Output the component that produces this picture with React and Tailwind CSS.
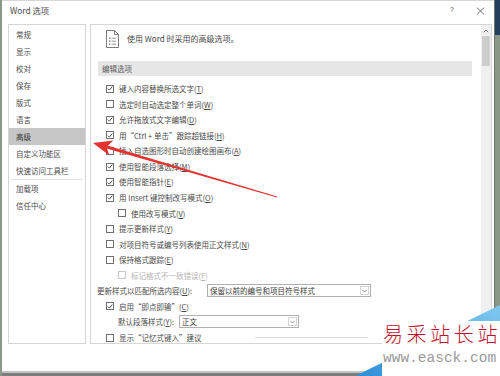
import React from "react";

const CJK = "font-['Noto_Sans_CJK_SC',sans-serif]";

function Check({ checked, disabled }) {
  return (
    <div
      className={`w-[8px] h-[8px] flex-none border ${
        disabled ? "border-[#c8c8c8]" : "border-[#707070]"
      } bg-white flex items-center justify-center`}
    >
      {checked && (
        <svg width="7" height="7" viewBox="0 0 7 7">
          <path d="M1 3.6 L2.8 5.4 L6.2 1.2" fill="none" stroke="#444" strokeWidth="1.1" />
        </svg>
      )}
    </div>
  );
}

function Label({ text, k, disabled }) {
  const idx = k ? text.lastIndexOf("(" + k + ")") : -1;
  const cls = disabled ? "text-[#b4b4b4]" : "text-[#4a4a4a]";
  if (idx < 0) return <span className={`whitespace-nowrap ${cls}`}>{text}</span>;
  return (
    <span className={`whitespace-nowrap ${cls}`}>
      {text.slice(0, idx + 1)}
      <span className="underline">{k}</span>
      {text.slice(idx + 2)}
    </span>
  );
}

function Row({ checked, text, k, indent, disabled }) {
  return (
    <div className={`h-[15.56px] flex items-center gap-[5px] ${indent ? "pl-[27px]" : "pl-[15px]"}`}>
      <Check checked={checked} disabled={disabled} />
      <Label text={text} k={k} disabled={disabled} />
    </div>
  );
}

function Select({ w, text }) {
  return (
    <div className={`${w} h-[13px] border border-[#b0b0b0] bg-white flex items-center pl-[2px]`}>
      <span className="flex-1 whitespace-nowrap text-[#3a3a3a]">{text}</span>
      <div className="w-[9px] h-[9px] mr-[1px] border border-[#d6d6d6] flex items-center justify-center">
        <svg width="5" height="4" viewBox="0 0 5 4">
          <path d="M0.5 1 L2.5 3 L4.5 1" fill="none" stroke="#777" strokeWidth="0.8" />
        </svg>
      </div>
    </div>
  );
}

export default function App() {
  const nav = ["常规", "显示", "校对", "保存", "版式", "语言", "高级", "自定义功能区", "快速访问工具栏"];
  return (
    <div className={`relative w-[500px] h-[376px] overflow-hidden bg-white flex ${CJK}`}>
      <div className="w-[2px] bg-[#8d968a]" />
      <div className="flex-1 flex flex-col">
        {/* title bar */}
        <div className="h-[24px] border-t border-[#d6d6d6] flex items-center pb-[4px] pl-[8px] pr-[9px]">
          <span className="text-[8.3px] text-[#4a4a4a]">Word 选项</span>
          <span className="ml-auto text-[7px] text-[#555] font-['Liberation_Sans',sans-serif]">?</span>
          <svg className="ml-[22px]" width="9" height="8" viewBox="0 0 9 8">
            <path d="M0.8 0.5 L8.2 7.5 M8.2 0.5 L0.8 7.5" stroke="#666" strokeWidth="0.9" />
          </svg>
        </div>
        {/* body */}
        <div className="h-[320px] flex">
          {/* left nav */}
          <div className="ml-[6px] w-[78px] border border-[#d6d6d6] pt-[1px] text-[7.5px] text-[#4a4a4a]">
            {nav.map((n) => (
              <div
                key={n}
                className={`h-[17px] flex items-center pl-[7px] whitespace-nowrap ${
                  n === "高级" ? "bg-[#c6c6c6] text-[#333]" : ""
                }`}
              >
                {n}
              </div>
            ))}
            <div className="h-px bg-[#e2e2e2] mx-[2px]" />
            <div className="h-[17px] flex items-center pl-[7px]">加载项</div>
            <div className="h-[17px] flex items-center pl-[7px]">信任中心</div>
          </div>
          {/* right panel */}
          <div className="ml-[4px] flex-1 border border-[#d6d6d6] flex overflow-hidden">
            <div className="flex-1 flex flex-col text-[7.5px] overflow-hidden">
              <div className="pl-[15px] pt-[5px] flex items-center gap-[8px]">
                <svg width="13" height="18" viewBox="0 0 13 18">
                  <path d="M0.5 0.5 H8.5 L12.5 4.5 V17.5 H0.5 Z" fill="white" stroke="#7a7a7a" />
                  <path d="M8.5 0.5 V4.5 H12.5" fill="none" stroke="#7a7a7a" />
                  <rect x="3" y="7.5" width="1.4" height="1.4" fill="#7a7a7a" />
                  <rect x="3" y="10.5" width="1.4" height="1.4" fill="#7a7a7a" />
                  <rect x="3" y="13.5" width="1.4" height="1.4" fill="#7a7a7a" />
                  <path d="M5.5 8.2 H10 M5.5 11.2 H10 M5.5 14.2 H10" stroke="#8a8a8a" strokeWidth="0.9" />
                </svg>
                <span className="text-[8px] text-[#4a4a4a] whitespace-nowrap">使用 Word 时采用的高级选项。</span>
              </div>
              <div className="mt-[13px] ml-[7px] w-[374px] h-[15px] flex-none bg-[#e6e6e6] flex items-center pl-[4px] text-[#5a5a5a]">
                编辑选项
              </div>
              <div className="mt-[5px] flex flex-col">
                <Row checked text="键入内容替换所选文字(T)" k="T" />
                <Row text="选定时自动选定整个单词(W)" k="W" />
                <Row checked text="允许拖放式文字编辑(D)" k="D" />
                <Row checked text="用“Ctrl + 单击”跟踪超链接(H)" k="H" />
                <Row text="插入自选图形时自动创建绘图画布(A)" k="A" />
                <Row checked text="使用智能段落选择(M)" k="M" />
                <Row checked text="使用智能指针(E)" k="E" />
                <Row checked text="用 Insert 键控制改写模式(O)" k="O" />
                <Row indent text="使用改写模式(V)" k="V" />
                <Row text="提示更新样式(Y)" k="Y" />
                <Row text="对项目符号或编号列表使用正文样式(N)" k="N" />
                <Row text="保持格式跟踪(E)" k="E" />
                <Row indent disabled text="标记格式不一致错误(F)" k="F" />
                <div className="h-[15.56px] flex items-center pl-[6px]">
                  <div className="w-[110px]">
                    <Label text="更新样式以匹配所选内容(U):" k="U" />
                  </div>
                  <Select w="w-[164px]" text="保留以前的编号和项目符号样式" />
                </div>
                <Row checked text="启用“即点即输”(C)" k="C" />
                <div className="h-[15.56px] flex items-center pl-[27px]">
                  <div className="w-[61px]">
                    <Label text="默认段落样式(Y):" k="Y" />
                  </div>
                  <Select w="w-[120px]" text="正文" />
                </div>
                <div className="h-[15.56px] flex items-center gap-[5px] pl-[15px]">
                  <Check />
                  <div className="w-[131px]">
                    <Label text="显示“记忆式键入”建议" />
                  </div>
                  <div className="w-[113px] h-px bg-[#dcdcdc]" />
                </div>
              </div>
            </div>
            {/* scrollbar */}
            <div className="w-[10px] flex-none bg-[#f0f0f0] flex flex-col items-center">
              <div className="h-[11px] flex items-center justify-center">
                <svg width="6" height="4" viewBox="0 0 6 4">
                  <path d="M0.8 3.2 L3 1 L5.2 3.2" fill="none" stroke="#606060" strokeWidth="0.9" />
                </svg>
              </div>
              <div className="w-[8px] h-[30px] bg-[#cdcdcd]" />
            </div>
          </div>
          <div className="w-[2px]" />
        </div>
        <div className="flex-1" />
        <div className="h-[2px] bg-[#c4c4c4]" />
        <div className="h-[3px] bg-[#7d7d7d]" />
      </div>
      {/* right window edge */}
      <div className="w-[6px] flex flex-col border-l border-[#6c7a6c]">
        <div className="h-[35px] bg-[#22405e]" />
        <div className="flex-1 bg-[#8a9887]" />
      </div>

      {/* red annotation arrow */}
      <svg className="absolute left-0 top-0 pointer-events-none" width="500" height="376" viewBox="0 0 500 376">
        <polygon points="107.4,145.6 277.1,196.6 276.9,197.4 106.6,148.4" fill="#e4332f" />
        <polygon points="93,143 113.3,140.6 106.5,147 109.5,155.6" fill="#e4332f" />
      </svg>

      {/* watermark */}
      <svg className="absolute left-0 top-0 pointer-events-none" width="500" height="376" viewBox="0 0 500 376">
        <defs>
          <linearGradient id="wmg" x1="0" y1="1" x2="1" y2="0">
            <stop offset="0" stopColor="#2f8fd6" />
            <stop offset="1" stopColor="#7fc9ef" />
          </linearGradient>
        </defs>
        <polygon points="355,376 500,305 500,376" fill="url(#wmg)" />
      </svg>
      <div className="absolute left-[382px] top-[321px] w-[118px] h-[55px] bg-white flex flex-col pl-[1px]">
        <span className="text-[20px] leading-[26px] tracking-[3.6px] font-light text-[#c4102c] whitespace-nowrap">易采站长站</span>
        <span className="mt-[3px] text-[14.5px] leading-[16px] text-[#9a9a9a] font-['Liberation_Mono',monospace] whitespace-nowrap">
          www.easck.com
        </span>
      </div>
    </div>
  );
}
